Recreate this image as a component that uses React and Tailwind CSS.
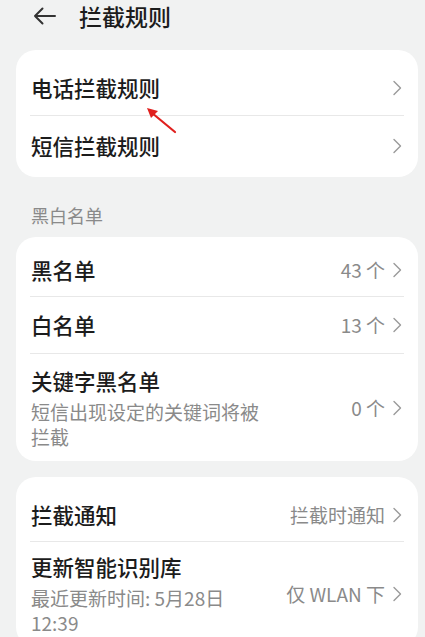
const font = { fontFamily: '"Noto Sans CJK SC", "Noto Sans", sans-serif' };

function Chevron() {
  return (
    <svg width="10" height="16" viewBox="0 0 10 16" className="shrink-0 ml-[7px]">
      <path d="M2 1.5 L8.5 8 L2 14.5" fill="none" stroke="#9a9a9a" strokeWidth="1.4" strokeLinecap="round" strokeLinejoin="round" />
    </svg>
  );
}

function Divider() {
  return <div className="mx-[14px] h-px bg-[#e8e8e8]" />;
}

function Row({ title, value, h }) {
  return (
    <div className={`flex items-center pl-[15px] pr-[16px] ${h}`}>
      <span className="flex-1 text-[21.5px] font-medium text-[#1c1c1c] leading-[28px]">{title}</span>
      {value && <span className="text-[19px] text-[#8a8a8a] leading-[26px]">{value}</span>}
      <Chevron />
    </div>
  );
}

function SubRow({ title, sub, value, pad }) {
  return (
    <div className={`flex items-center pl-[15px] pr-[16px] ${pad}`}>
      <div className="flex-1">
        <div className="text-[21.5px] font-medium text-[#1c1c1c] leading-[28px]">{title}</div>
        <div className="mt-[4px] w-[236px] text-[19px] text-[#8a8a8a] leading-[25px]">{sub}</div>
      </div>
      <span className="text-[19px] text-[#8a8a8a] leading-[26px]">{value}</span>
      <Chevron />
    </div>
  );
}

export default function App() {
  return (
    <div className="relative w-[425px] h-[637px] overflow-hidden bg-[#f1f2f2]" style={font}>
      <header className="flex items-center h-[32px] pl-[33px]">
        <svg width="23" height="18" viewBox="0 0 23 18">
          <path d="M22 9 H2 M9.5 1.5 L2 9 L9.5 16.5" fill="none" stroke="#333" strokeWidth="2" strokeLinecap="round" strokeLinejoin="round" />
        </svg>
        <h1 className="ml-[23px] text-[23px] font-medium text-[#1c1c1c] leading-[30px]">拦截规则</h1>
      </header>

      <div className="ml-[16px] mr-[7px] mt-[18px] bg-white rounded-[20px]">
        <Row title="电话拦截规则" h="h-[65px] pt-[11px]" />
        <Divider />
        <Row title="短信拦截规则" h="h-[61px] pb-[2px]" />
      </div>

      <div className="pl-[31px] pt-[27px] pb-[11px] text-[18px] leading-[22px] text-[#8a8a8a]">黑白名单</div>

      <div className="ml-[16px] mr-[7px] bg-white rounded-[20px]">
        <Row title="黑名单" value="43 个" h="h-[59px] pt-[7px]" />
        <Divider />
        <Row title="白名单" value="13 个" h="h-[56px]" />
        <Divider />
        <SubRow title="关键字黑名单" sub="短信出现设定的关键词将被拦截" value="0 个" pad="pt-[13px] pb-[12px]" />
      </div>

      <div className="ml-[16px] mr-[7px] mt-[16px] bg-white rounded-[20px]">
        <Row title="拦截通知" value="拦截时通知" h="h-[64px] pt-[12px]" />
        <Divider />
        <SubRow title="更新智能识别库" sub="最近更新时间: 5月28日 12:39" value="仅 WLAN 下" pad="pt-[11px] pb-[12px]" />
      </div>

      <svg className="absolute left-[140px] top-[102px]" width="42" height="36" viewBox="0 0 42 36">
        <path d="M35 30 L12 11" stroke="#e0201e" strokeWidth="2.2" strokeLinecap="round" />
        <path d="M7 6 L18 9 L11 16 Z" fill="#e0201e" />
      </svg>
    </div>
  );
}
